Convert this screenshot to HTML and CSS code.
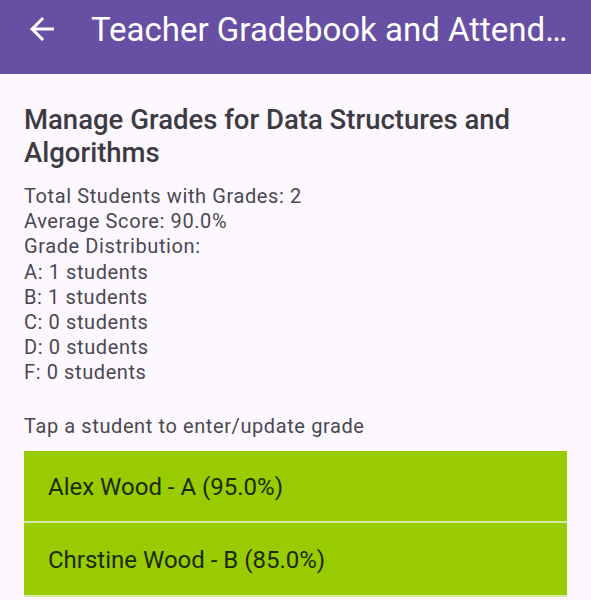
FILE: index.html
```html
<!DOCTYPE html>
<html>
<head>
<meta charset="utf-8">
<link rel="stylesheet" href="styles.css">
</head>
<body>
<header class="appbar">
  <svg class="back" viewBox="0 0 24 24" width="36" height="36"><path d="M20 11H7.83l5.59-5.59L12 4l-8 8 8 8 1.41-1.41L7.83 13H20v-2z" fill="#ffffff"/></svg>
  <div class="title">Teacher Gradebook and Attendance</div>
</header>
<main class="content">
  <h1 class="heading">Manage Grades for Data Structures and Algorithms</h1>
  <div class="stats">
    <div>Total Students with Grades: 2</div>
    <div>Average Score: 90.0%</div>
    <div>Grade Distribution:</div>
    <div>A: 1 students</div>
    <div>B: 1 students</div>
    <div>C: 0 students</div>
    <div>D: 0 students</div>
    <div>F: 0 students</div>
  </div>
  <p class="hint">Tap a student to enter/update grade</p>
  <ul class="list">
    <li class="item">Alex Wood - A (95.0%)</li>
    <li class="item">Chrstine Wood - B (85.0%)</li>
  </ul>
</main>
</body>
</html>
```
FILE: styles.css
```css
html, body {
  margin: 0;
  padding: 0;
  background: #fdf7ff;
  font-family: Roboto, "Noto Sans", sans-serif;
  overflow: hidden;
}
.appbar {
  height: 74px;
  background: #6750a4;
  display: flex;
  align-items: center;
  padding: 0 21px 0 24px;
  box-sizing: border-box;
  color: #ffffff;
}
.back {
  flex: none;
  margin-top: -16px;
}
.title {
  margin-left: 31px;
  margin-top: -16px;
  font-size: 33px;
  white-space: nowrap;
  overflow: hidden;
  text-overflow: ellipsis;
  min-width: 0;
}
.content {
  padding: 0 24px;
}
.heading {
  margin: 29px 0 0;
  font-size: 27.5px;
  font-weight: 500;
  line-height: 33px;
  color: #3d3b42;
}
.stats {
  margin-top: 15px;
  font-size: 20px;
  letter-spacing: 0.6px;
  line-height: 25.2px;
  color: #4a4850;
}
.hint {
  margin: 28px 0 0;
  font-size: 20px;
  letter-spacing: 0.6px;
  line-height: 25px;
  color: #4a4850;
}
.list {
  list-style: none;
  margin: 12px 0 0;
  padding: 0;
}
.item {
  background: #99cc00;
  height: 72px;
  box-sizing: border-box;
  display: flex;
  align-items: center;
  padding: 3px 0 0 24px;
  font-size: 24px;
  color: #1c2a0c;
  border-bottom: 2px solid #d8eaa6;
}
.item + .item {
  height: 74px;
}
```
